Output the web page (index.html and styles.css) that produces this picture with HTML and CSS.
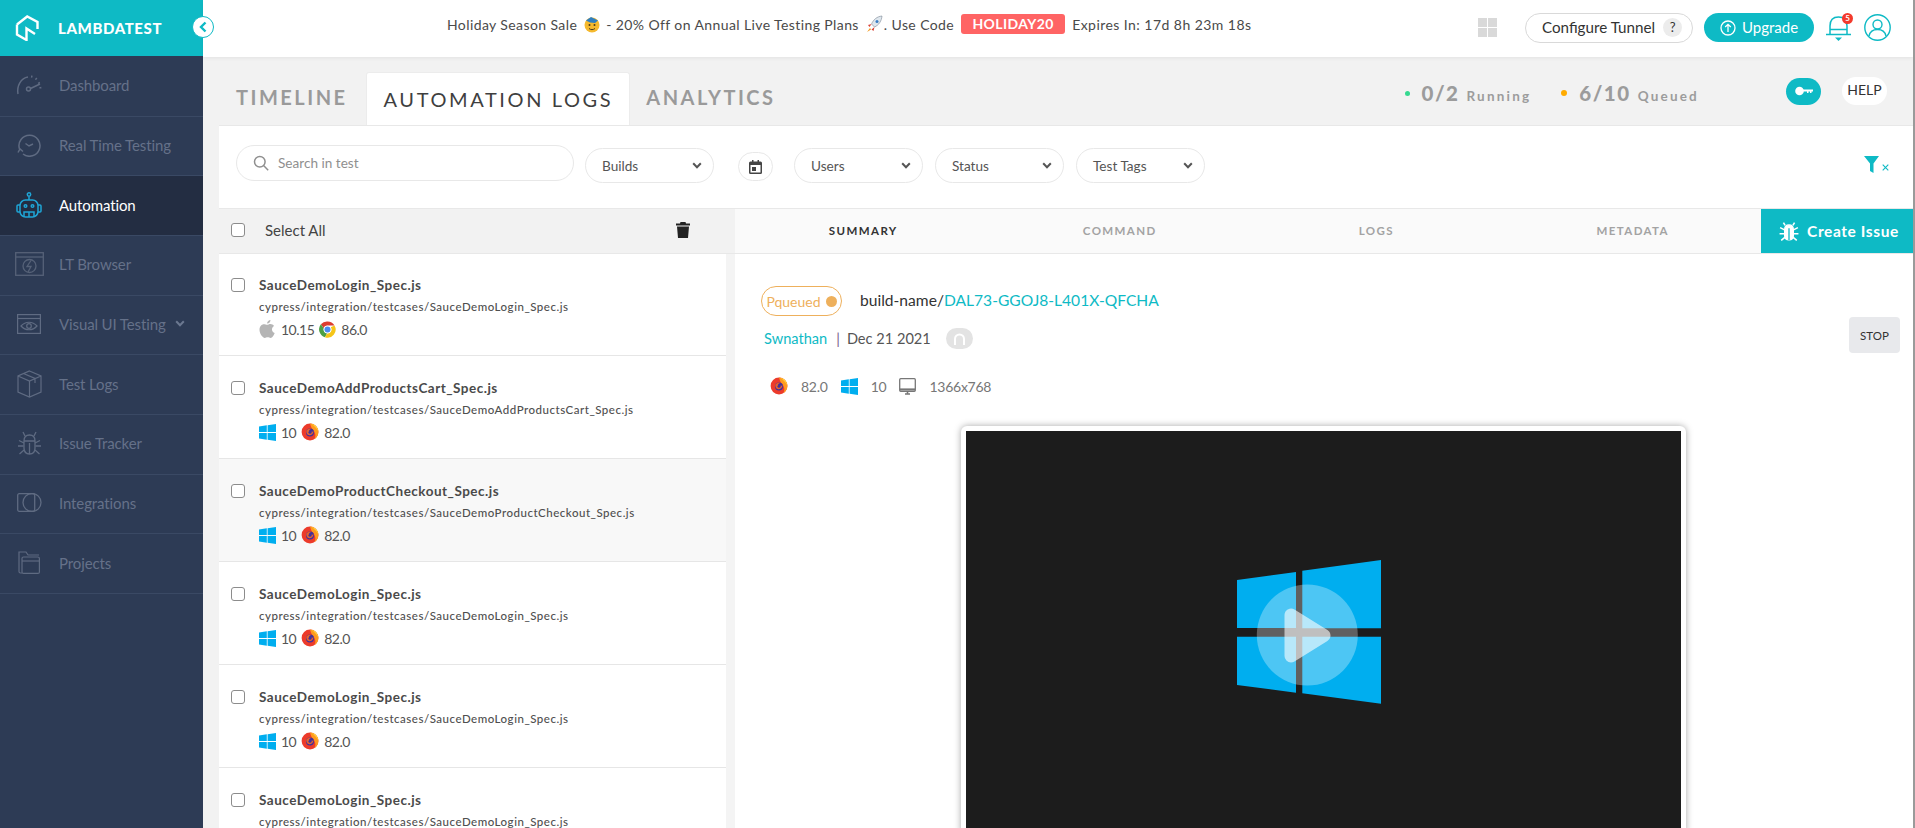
FILE: index.html
```html
<!DOCTYPE html>
<html lang="en">
<head>
<meta charset="utf-8">
<title>LambdaTest Automation Logs</title>
<link rel="stylesheet" href="styles.css">
</head>
<body>
<svg class="defs" aria-hidden="true">
  <symbol id="win" viewBox="0 0 17 17">
    <path fill="#00aeef" d="M0 2.4 7.8 1.3V8H0zM8.6 1.2 17 0V8H8.6zM0 9h7.8v6.7L0 14.6zM8.6 9H17v8l-8.4-1.2z"/>
  </symbol>
  <symbol id="fox" viewBox="0 0 18 18">
    <circle cx="9" cy="9" r="8.4" fill="#ec3b2b"/>
    <path fill="#ff9a1f" d="M9 .6c4.6 0 8.4 3.8 8.4 8.4 0 3-1.5 5.6-3.9 7.1 1.400-2.600 1.300-6.400-1.500-9.100C10.500 5.600 9.800 3.500 9 .6z"/>
    <path fill="#ffd83a" d="M10.500.8c3.700.8 6.500 4 6.900 7.700-1.100-2.800-4-5.400-6.900-7.700z"/>
    <circle cx="9" cy="9.400" r="4" fill="#41309c"/>
    <path fill="#f8681f" d="M5.400 7.600C6.600 5.800 8.600 5.400 10.500 6c-1.600.3-2.300 1-2.400 2 1.400 1.400 3.300.7 4.400.2-.3 2.600-2.200 4.300-4.200 4.100C6 12 4.900 9.700 5.400 7.600z" opacity=".9"/>
    <circle cx="9" cy="9.300" r="1.500" fill="#41309c"/>
  </symbol>
  <symbol id="chrome" viewBox="0 0 18 18">
    <path fill="#dc3d30" d="M9 .5A8.500 8.500 0 0 1 16.400 4.800H9A4.200 4.200 0 0 0 5 7.800L2 3.500A8.500 8.500 0 0 1 9 .5z"/>
    <path fill="#4c9f45" d="M2 3.500 5 7.800A4.200 4.200 0 0 0 8.600 13.200L6.300 17.100A8.500 8.500 0 0 1 2 3.500z"/>
    <path fill="#f5c518" d="M16.400 4.800A8.500 8.500 0 0 1 6.300 17.100L8.600 13.200A4.200 4.200 0 0 0 12.400 6.500z"/>
    <circle cx="9" cy="9" r="4" fill="#fff"/>
    <circle cx="9" cy="9" r="3.200" fill="#4a8bf0"/>
  </symbol>
  <symbol id="apple" viewBox="0 0 16 18">
    <path fill="#b5b5b5" d="M11.500 0c.1 1.800-1.500 3.700-3.400 3.600C7.900 1.900 9.700.1 11.500 0zM8.100 4.800c.9 0 1.900-.8 3.400-.8 1.300 0 2.700.7 3.500 1.900-3 1.800-2.500 5.800.7 7-.8 2-2.400 5-4.100 5-1.100 0-1.500-.7-2.900-.7s-1.900.7-2.900.7C3.500 17.900.5 13.500.5 9.800.5 6.300 2.800 4.200 4.800 4.200c1.300 0 2.400.6 3.300.6z"/>
  </symbol>
  <symbol id="chev" viewBox="0 0 10 7">
    <path d="M1.200 1.200 5 5.200 8.800 1.200" fill="none" stroke="currentColor" stroke-width="2"/>
  </symbol>
</svg>

<aside class="sidebar">
  <div class="brand">
    <svg class="brand-logo" width="24" height="26" viewBox="0 0 24 26" fill="none" stroke="#fff" stroke-width="2.400">
      <path d="M2 9.500 12.200 1.500 22.500 7V14M2 9.500V19.500L11.500 25V13.500L20 19"/>
    </svg>
    <span class="brand-name">LAMBDATEST</span>
    <span class="collapse">
      <svg width="10" height="12" viewBox="0 0 10 12" fill="none" stroke="#0ebac5" stroke-width="2.400"><path d="M7.500 1.500 3 6l4.500 4.500"/></svg>
    </span>
  </div>
  <nav class="nav">
    <a class="nav-row"><span class="nav-ico"><svg width="26" height="22" viewBox="0 0 26 22" fill="none" stroke="#5f6b82" stroke-width="1.500"><path d="M2 20C.5 12 5 4 12 3"/><path d="M15 2.500C20 3 24 8 24.500 15" stroke-width="2" stroke-dasharray="1.500 3.500"/><circle cx="12.500" cy="15" r="2"/><path d="M14.500 14.500 24 10"/></svg></span>Dashboard</a>
    <a class="nav-row"><span class="nav-ico"><svg width="24" height="24" viewBox="0 0 24 24" fill="none" stroke="#5f6b82" stroke-width="1.500"><path d="M2.500 16A10.500 10.500 0 1 1 6 21"/><path d="M1 19.500 3 16l3 2.500"/><path d="M8.500 10.500 12 13l4-2"/></svg></span>Real Time Testing</a>
    <a class="nav-row active"><span class="nav-ico"><svg width="26" height="26" viewBox="0 0 26 26" fill="none" stroke="#1fa5d6" stroke-width="1.500"><circle cx="13" cy="2.500" r="1.700"/><path d="M13 4.500V8"/><rect x="4" y="8" width="18" height="17" rx="5.500"/><path d="M4 13H2a1 1 0 0 0-1 1v5a1 1 0 0 0 1 1h2M22 13h2a1 1 0 0 1 1 1v5a1 1 0 0 1-1 1h-2"/><circle cx="9.500" cy="14" r="1.300"/><circle cx="16.500" cy="14" r="1.300"/><path d="M8 25v-5h10v5M13 20v5"/></svg></span>Automation</a>
    <a class="nav-row"><span class="nav-ico"><svg width="29" height="24" viewBox="0 0 29 24" fill="none" stroke="#566278" stroke-width="1.300"><rect x=".7" y=".7" width="27.600" height="22.600"/><path d="M1 5h27"/><circle cx="14.500" cy="14" r="6.500"/><path d="M16 8.500 12 14.500h4L13 20"/></svg></span>LT Browser</a>
    <a class="nav-row"><span class="nav-ico"><svg width="24" height="20" viewBox="0 0 24 20" fill="none" stroke="#5f6b82" stroke-width="1.200"><rect x=".6" y=".6" width="22.800" height="18.800"/><path d="M1 4.500h22"/><path d="M4 12c4.500-5 11.500-5 16 0-4.500 5-11.500 5-16 0z"/><circle cx="12" cy="12" r="2.300"/></svg></span>Visual UI Testing<svg class="nav-chev" width="10" height="7"><use href="#chev"/></svg></a>
    <a class="nav-row"><span class="nav-ico"><svg width="25" height="28" viewBox="0 0 25 28" fill="none" stroke="#5f6b82" stroke-width="1.200"><path d="M12.500 1 24 6v16l-11.500 5L1 22V6zM1 6l11.500 5L24 6M12.500 11v16M6.500 3.500 18 8.500V13"/></svg></span>Test Logs</a>
    <a class="nav-row"><span class="nav-ico"><svg width="25" height="26" viewBox="0 0 25 26" fill="none" stroke="#5f6b82" stroke-width="1.300"><path d="M7 11c0-4 2.500-6 5.500-6s5.500 2 5.500 6v7c0 4-2.500 6-5.500 6S7 22 7 18z"/><path d="M7 11h11M12.500 13v11M8 6 6 2M17 6l2-4M7 13 2 10.500M18 13l5-2.500M6.500 16H1M18.500 16H24M7 20l-4.500 4M18 20l4.500 4"/></svg></span>Issue Tracker</a>
    <a class="nav-row"><span class="nav-ico"><svg width="25" height="19" viewBox="0 0 25 19" fill="none" stroke="#5f6b82" stroke-width="1.300"><rect x=".7" y=".7" width="17" height="17.600" rx="1.500"/><circle cx="15" cy="9.500" r="9"/></svg></span>Integrations</a>
    <a class="nav-row"><span class="nav-ico"><svg width="22" height="23" viewBox="0 0 22 23" fill="none" stroke="#5f6b82" stroke-width="1.200"><path d="M4 22H2.500A1.500 1.500 0 0 1 1 20.500V1h7l2 3h11"/><rect x="4" y="6" width="17.400" height="16.400" rx="1.500"/><path d="M4 10h17"/></svg></span>Projects</a>
  </nav>
</aside>

<div class="main">
  <header class="topbar">
    <div class="promo">
      <span>Holiday Season Sale</span>
      <svg class="emoji" width="16" height="17" viewBox="0 0 16 17"><circle cx="8" cy="9" r="7.500" fill="#f5b92e"/><path d="M2 4.500 7 1l7 3.500-3 2.500-5-.5z" fill="#2f7fc0"/><circle cx="5.500" cy="9" r="1" fill="#4a3a1a"/><circle cx="10.500" cy="9" r="1" fill="#4a3a1a"/><path d="M5 12.500c2 1.500 4 1.500 6 0" stroke="#4a3a1a" fill="none"/></svg>
      <span>- 20% Off on Annual Live Testing Plans</span>
      <svg class="emoji" width="17" height="18" viewBox="0 0 17 18"><path d="M16 1c-5 .5-8.500 3.500-10.500 8l3 3c4.500-2 7-6 7.500-11z" fill="#dfe7ee" stroke="#7b8794" stroke-width=".6"/><path d="M5.500 9 2 10l1.500 2zM8.500 12 7.500 16l-2-1.500z" fill="#d9443a"/><path d="M4 13 1 17l4-2.500z" fill="#f39a1e"/><circle cx="11" cy="6.500" r="1.500" fill="#3b7dc4"/></svg>
      <span class="promo-tight">. Use Code</span>
      <span class="code">HOLIDAY20</span>
      <span>Expires In: 17d 8h 23m 18s</span>
    </div>
    <div class="top-actions">
      <span class="apps"><i></i><i></i><i></i><i></i></span>
      <button class="tunnel">Configure Tunnel<span class="q">?</span></button>
      <button class="upgrade"><svg width="16" height="16" viewBox="0 0 16 16" fill="none" stroke="#fff" stroke-width="1.300"><circle cx="8" cy="8" r="7"/><path d="M8 12V4.500M5.200 7 8 4.300 10.800 7"/></svg>Upgrade</button>
      <span class="bell">
        <svg width="27" height="28" viewBox="0 0 27 28" fill="none" stroke="#0ebac5" stroke-width="1.500"><path d="M5 20V12C5 6 8.500 3 13.500 3S22 6 22 12v8M1 20.500h25"/><path d="M5 15.500h17"/><path d="M10 23.500h7l-3.500 3.500z" fill="#0ebac5" stroke="none"/></svg>
        <b class="badge">5</b>
      </span>
      <svg class="user" width="27" height="27" viewBox="0 0 27 27" fill="none" stroke="#0ebac5" stroke-width="1.400"><circle cx="13.500" cy="13.500" r="12.700"/><circle cx="13.500" cy="10.500" r="4.500"/><path d="M5 22c1-4.500 4.500-6.500 8.500-6.500S21 17.500 22 22"/></svg>
    </div>
  </header>

  <div class="tabbar">
    <span class="tab first">TIMELINE</span>
    <span class="tab active">AUTOMATION LOGS</span>
    <span class="tab">ANALYTICS</span>
    <div class="stats">
      <span class="stat"><i class="dot green"></i><b>0/2</b><small>Running</small></span>
      <span class="stat"><i class="dot amber"></i><b>6/10</b><small>Queued</small></span>
      <span class="key"><svg width="18" height="10" viewBox="0 0 18 10" fill="#fff"><circle cx="4.500" cy="5" r="4.300"/><path d="M8 3.500h10v2H16.500v1.500h-1.500V5.500h-1.500v1.500H12V5.500H8z"/></svg></span>
      <span class="help">HELP</span>
    </div>
  </div>

  <div class="content">
    <div class="filters">
      <label class="search">
        <svg width="16" height="16" viewBox="0 0 16 16" fill="none" stroke="#8f8f8f" stroke-width="1.500"><circle cx="6.800" cy="6.800" r="5.300"/><path d="m10.800 10.800 4.400 4.400"/></svg>
        <span>Search in test</span>
      </label>
      <span class="select">Builds<svg width="10" height="7"><use href="#chev"/></svg></span>
      <span class="cal"><svg width="13" height="14" viewBox="0 0 13 14" fill="#444"><path d="M1.500 1.500H3V0h1.500v1.500h4V0H10v1.500h1.500A1.500 1.500 0 0 1 13 3v9.500a1.500 1.500 0 0 1-1.500 1.500h-10A1.500 1.500 0 0 1 0 12.500V3a1.500 1.500 0 0 1 1.500-1.500zM1.500 5v7.500h10V5z"/><rect x="3" y="7" width="4" height="4"/></svg></span>
      <span class="select">Users<svg width="10" height="7"><use href="#chev"/></svg></span>
      <span class="select">Status<svg width="10" height="7"><use href="#chev"/></svg></span>
      <span class="select">Test Tags<svg width="10" height="7"><use href="#chev"/></svg></span>
      <span class="clear-filter"><svg width="15" height="17" viewBox="0 0 15 17" fill="#0ebac5"><path d="M0 0h15L9.500 7.500V17L6 15V7.500z"/></svg><svg class="clear-x" width="7" height="7" viewBox="0 0 7 7" stroke="#0ebac5" stroke-width="1.100"><path d="m.7.7 5.600 5.600M6.300.7.700 6.300"/></svg></span>
    </div>

    <div class="split">
      <section class="list">
        <div class="list-head">
          <input class="check" type="checkbox" aria-label="Select all">
          <span class="select-all">Select All</span>
          <svg class="trash" width="14" height="16" viewBox="0 0 14 16" fill="#222"><path d="M4.500 0h5l.5 1.500h4v2H0v-2h4zM1 4.500h12L12 16H2z"/></svg>
        </div>
        <article class="row">
          <input class="check" type="checkbox" aria-label="Select test">
          <div>
            <h3>SauceDemoLogin_Spec.js</h3>
            <p class="path">cypress/integration/testcases/SauceDemoLogin_Spec.js</p>
            <div class="meta"><svg class="apple-ico" width="16" height="18"><use href="#apple"/></svg>10.15<svg width="17" height="17"><use href="#chrome"/></svg>86.0</div>
          </div>
        </article>
        <article class="row">
          <input class="check" type="checkbox" aria-label="Select test">
          <div>
            <h3>SauceDemoAddProductsCart_Spec.js</h3>
            <p class="path">cypress/integration/testcases/SauceDemoAddProductsCart_Spec.js</p>
            <div class="meta"><svg width="17" height="17"><use href="#win"/></svg>10<svg width="18" height="18"><use href="#fox"/></svg>82.0</div>
          </div>
        </article>
        <article class="row hover">
          <input class="check" type="checkbox" aria-label="Select test">
          <div>
            <h3>SauceDemoProductCheckout_Spec.js</h3>
            <p class="path">cypress/integration/testcases/SauceDemoProductCheckout_Spec.js</p>
            <div class="meta"><svg width="17" height="17"><use href="#win"/></svg>10<svg width="18" height="18"><use href="#fox"/></svg>82.0</div>
          </div>
        </article>
        <article class="row">
          <input class="check" type="checkbox" aria-label="Select test">
          <div>
            <h3>SauceDemoLogin_Spec.js</h3>
            <p class="path">cypress/integration/testcases/SauceDemoLogin_Spec.js</p>
            <div class="meta"><svg width="17" height="17"><use href="#win"/></svg>10<svg width="18" height="18"><use href="#fox"/></svg>82.0</div>
          </div>
        </article>
        <article class="row">
          <input class="check" type="checkbox" aria-label="Select test">
          <div>
            <h3>SauceDemoLogin_Spec.js</h3>
            <p class="path">cypress/integration/testcases/SauceDemoLogin_Spec.js</p>
            <div class="meta"><svg width="17" height="17"><use href="#win"/></svg>10<svg width="18" height="18"><use href="#fox"/></svg>82.0</div>
          </div>
        </article>
        <article class="row">
          <input class="check" type="checkbox" aria-label="Select test">
          <div>
            <h3>SauceDemoLogin_Spec.js</h3>
            <p class="path">cypress/integration/testcases/SauceDemoLogin_Spec.js</p>
          </div>
        </article>
      </section>

      <section class="detail">
        <div class="detail-tabs">
          <span class="dtab current">SUMMARY</span>
          <span class="dtab">COMMAND</span>
          <span class="dtab">LOGS</span>
          <span class="dtab">METADATA</span>
          <button class="issue"><svg width="20" height="20" viewBox="0 0 18 18" fill="#fff" stroke="#fff"><path d="M5 8c0-3 1.500-4.500 4-4.500S13 5 13 8v5c0 2.500-1.500 4-4 4s-4-1.500-4-4z"/><path d="M5.500 4 4 1.500M12.500 4 14 1.500M5 8 1 6M13 8l4-2M5 11.500H.5M13 11.500h4.500M5.500 14.500 2 17.500M12.500 14.500l3.500 3" fill="none" stroke-width="1.400"/><path d="M9 6.500v10.500" stroke="#0ebac5" stroke-width="1.200"/></svg>Create Issue</button>
        </div>
        <div class="summary">
          <div class="summary-head">
            <div class="info">
              <div class="info-top">
                <span class="status">Pqueued<i></i></span>
                <span class="build">build-name/<a>DAL73-GGOJ8-L401X-QFCHA</a></span>
              </div>
              <div class="info-by">
                <a>Swnathan</a><span class="pipe">|</span><span>Dec 21 2021</span>
                <span class="tag"><svg width="13" height="13" viewBox="0 0 13 13" fill="none" stroke="#fff" stroke-width="2"><path d="M2 13V7a4.500 4.500 0 0 1 9 0v6"/></svg></span>
              </div>
            </div>
            <button class="stop">STOP</button>
          </div>
          <div class="env">
            <svg width="18" height="18"><use href="#fox"/></svg><span>82.0</span>
            <svg width="17" height="17"><use href="#win"/></svg><span>10</span>
            <svg width="17" height="17" viewBox="0 0 17 17" fill="none" stroke="#777" stroke-width="1.300"><rect x=".7" y=".7" width="15.600" height="12.600" rx="1"/><path d="M1 11.500h15" stroke-width="2.200"/><path d="M6 16h5M8.500 13.500V16" stroke-width="1.600"/></svg><span>1366x768</span>
          </div>
          <div class="video-card">
            <svg class="video" width="715" height="402" viewBox="0 0 715 402">
              <rect width="715" height="402" fill="#1c1c1c"/>
              <path fill="#00aeef" d="M271 149 330 141V197H271zM336.300 139.700 415 129V197.300H336.300zM271 205.700H330V261.700L271 254zM336.300 205.700H415V272.700L336.300 262.300z"/>
              <circle cx="341.300" cy="204" r="50.500" fill="#fff" opacity=".3"/>
              <path d="M325 184V225L358 204.500z" fill="#fff" stroke="#fff" stroke-width="13" stroke-linejoin="round" opacity=".6"/>
            </svg>
          </div>
        </div>
      </section>
    </div>
  </div>
</div>
</body>
</html>
```

FILE: styles.css
```css
* { box-sizing: border-box; }
html, body { height: 100%; }
body {
  margin: 0;
  display: flex;
  height: 828px;
  overflow: hidden;
  background: #fff;
  color: #333;
  font-family: Lato, "Open Sans", sans-serif;
  border-right: 2px solid #9a9a9a;
}
a { color: inherit; text-decoration: none; }
h3, p { margin: 0; }
button { font-family: inherit; border: 0; padding: 0; }
.defs { position: absolute; width: 0; height: 0; }

/* Sidebar */
.sidebar { width: 203px; flex: none; background: #2d3b55; }
.brand {
  position: relative;
  height: 56px;
  display: flex;
  align-items: center;
  padding-left: 15px;
  background: #0ebac5;
}
.brand-name {
  margin-left: 19px;
  color: #fff;
  font-size: 15px;
  font-weight: 900;
  letter-spacing: .6px;
}
.collapse {
  position: absolute;
  z-index: 3;
  right: -11px;
  top: 16px;
  width: 22px;
  height: 22px;
  display: flex;
  align-items: center;
  justify-content: center;
  background: #fff;
  border: 1px solid #0ebac5;
  border-radius: 50%;
}
.nav { padding-top: 1px; }
.nav-row {
  height: 59.67px;
  display: flex;
  align-items: center;
  padding-bottom: 2px;
  border-bottom: 1px solid #3a4964;
  color: #657189;
  font-size: 15px;
  letter-spacing: -.12px;
}
.nav-row.active { background: #232d42; color: #fff; }
.nav-ico { width: 59px; flex: none; display: flex; justify-content: center; padding-right: 1px; }
.nav-chev { margin-left: 9px; color: #6b7890; }

/* Main column */
.main { flex: 1; min-width: 0; display: flex; flex-direction: column; background: #f2f2f2; }
.topbar {
  position: relative;
  z-index: 2;
  height: 57px;
  flex: none;
  display: flex;
  align-items: flex-start;
  background: #fff;
  box-shadow: 0 1px 4px rgba(0, 0, 0, .07);
}
.promo {
  margin-left: 244px;
  height: 48px;
  display: flex;
  align-items: center;
  color: #4a4a4a;
  font-size: 14px;
  letter-spacing: .4px;
  white-space: nowrap;
}
.emoji { margin: 0 6px 0 7px; }
.promo-tight { margin-left: -5px; }
.code {
  margin: 0 7px;
  width: 104px;
  height: 20px;
  line-height: 20px;
  text-align: center;
  color: #fff;
  background: #ff6464;
  border-radius: 3px;
  font-weight: 700;
  font-size: 14px;
}
.code + span { letter-spacing: .45px; }
.top-actions { margin-left: auto; margin-right: 22px; height: 55px; display: flex; align-items: center; }
.apps { width: 19px; display: grid; grid-template-columns: 9px 9px; gap: 1px; margin-right: 28px; }
.apps i { height: 9px; background: #d9d9d9; }
.tunnel {
  width: 168px;
  height: 30px;
  display: flex;
  align-items: center;
  justify-content: center;
  padding: 0 0 2px 6px;
  background: #fff;
  border: 1px solid #d9d9d9;
  border-radius: 15px;
  color: #333;
  font-size: 15.200px;
}
.q {
  width: 19px;
  height: 19px;
  margin: 2px 0 0 8px;
  border-radius: 50%;
  background: #ececec;
  font-size: 13px;
  line-height: 19px;
}
.upgrade {
  width: 110px;
  height: 29px;
  margin-left: 11px;
  display: flex;
  align-items: center;
  justify-content: center;
  gap: 6px;
  padding-bottom: 2px;
  background: #0ebac5;
  color: #fff;
  border-radius: 15px;
  font-size: 15px;
}
.upgrade svg { margin-top: 2px; }
.bell { position: relative; width: 27px; height: 28px; margin-left: 11px; }
.badge {
  position: absolute;
  right: -1px;
  top: -1px;
  width: 11px;
  height: 11px;
  border-radius: 50%;
  background: #f33a2c;
  color: #fff;
  font-size: 8px;
  line-height: 11px;
  text-align: center;
}
.user { margin-left: 12px; }

/* Tab bar */
.tabbar { height: 68px; flex: none; display: flex; align-items: flex-end; padding-left: 33px; background: #f2f2f2; }
.tab {
  height: 53px;
  line-height: 50px;
  color: #9a9a9a;
  font-size: 20px;
  font-weight: 700;
  letter-spacing: 2.500px;
}
.tab.first { margin-right: 18px; }
.tab.active {
  padding: 1px 16px 0 17px;
  margin-right: 16px;
  background: #fff;
  color: #3f3f3f;
  font-weight: 400;
  letter-spacing: 2.600px;
  border-radius: 3px 3px 0 0;
  border: 1px solid #ececec;
  border-bottom: 0;
}
.stats { margin-left: auto; margin-right: 26px; height: 68px; display: flex; align-items: center; padding-top: 4px; }
.stat { display: flex; align-items: baseline; color: #9c9c9c; margin-right: 30px; font-weight: 700; }
.stat:nth-child(2) { margin-right: 87px; }
.stat b { font-size: 20.500px; letter-spacing: 1.500px; }
.stat small { margin-left: 7px; font-size: 13.500px; letter-spacing: 2.200px; }
.dot { width: 5px; height: 5px; border-radius: 50%; margin-right: 12px; align-self: center; }
.dot.green { background: #35d990; }
.dot.amber { background: #ffab00; width: 6px; height: 6px; }
.key {
  width: 35px;
  height: 27px;
  display: flex;
  align-items: center;
  justify-content: center;
  margin: -4px 21px 0 0;
  background: #0ebac5;
  border-radius: 14px;
}
.help {
  width: 45px;
  height: 28px;
  line-height: 26px;
  margin-top: -4px;
  text-align: center;
  background: #fff;
  border-radius: 14px;
  color: #333;
  font-size: 14px;
}

/* Content */
.content { flex: 1; min-height: 0; margin-left: 16px; background: #fff; border-top: 1px solid #e8e8e8; display: flex; flex-direction: column; }
.filters {
  height: 82px;
  flex: none;
  display: flex;
  align-items: flex-start;
  padding: 20px 24px 0 17px;
  font-size: 13.600px;
  color: #555;
}
.search {
  width: 338px;
  height: 36px;
  display: flex;
  align-items: center;
  gap: 9px;
  padding: 0 0 1px 16px;
  border: 1px solid #e8e8e8;
  border-radius: 18px;
  color: #8f8f8f;
  margin-top: -1px;
}
.select {
  width: 129px;
  height: 35px;
  margin-left: 12px;
  display: flex;
  align-items: center;
  justify-content: space-between;
  padding: 0 11px 0 16px;
  border: 1px solid #e8e8e8;
  border-radius: 18px;
  color: #555;
  margin-top: 2px;
}
.search + .select { margin-left: 11px; }
.cal {
  width: 35px;
  height: 29px;
  margin: 6px 21px 0 24px;
  display: flex;
  align-items: center;
  justify-content: center;
  border: 1px solid #e8e8e8;
  border-radius: 15px;
}
.cal + .select { margin-left: 0; }
.clear-filter { margin-left: auto; margin-top: 10px; display: flex; align-items: flex-end; gap: 3px; }
.clear-x { margin-bottom: 2px; }
.split { flex: 1; min-height: 0; display: flex; }

/* Test list */
.list { width: 516px; flex: none; overflow: hidden; background: #f4f4f4; }
.check {
  appearance: none;
  width: 14px;
  height: 14px;
  margin: 0;
  flex: none;
  background: #fff;
  border: 1.5px solid #8c8c8c;
  border-radius: 3px;
}
.list-head {
  height: 46px;
  display: flex;
  align-items: center;
  padding: 0 45px 2px 12px;
  background: #f2f2f2;
  border-top: 1px solid #e8e8e8;
  border-bottom: 1px solid #e8e8e8;
}
.select-all { margin-left: 20px; font-size: 15px; color: #444; }
.trash { margin-left: auto; }
.row {
  width: 507px;
  height: 103px;
  display: flex;
  align-items: flex-start;
  gap: 14px;
  padding: 25px 0 0 12px;
  background: #fff;
  border-bottom: 1px solid #e6e6e6;
}
.list-head + .row { height: 102px; padding-top: 24px; }
.row.hover { background: #f8f8f8; }
.row h3 { font-size: 13.500px; line-height: 14px; font-weight: 700; color: #4a4a4a; letter-spacing: .5px; }
.row .path { margin-top: 8px; font-size: 11.500px; line-height: 14px; font-weight: 500; color: #4f4f4f; letter-spacing: .51px; white-space: nowrap; }
.meta {
  height: 18px;
  margin-top: 6px;
  display: flex;
  align-items: center;
  gap: 5px;
  font-size: 14px;
  letter-spacing: -.5px;
  color: #555;
}
.apple-ico { margin-right: 1px; }

/* Detail */
.detail { flex: 1; min-width: 0; display: flex; flex-direction: column; }
.detail-tabs {
  height: 46px;
  flex: none;
  display: flex;
  align-items: stretch;
  background: #fafafa;
  border-top: 1px solid #e8e8e8;
  border-bottom: 1px solid #e8e8e8;
}
.dtab {
  flex: 1;
  display: flex;
  align-items: center;
  justify-content: center;
  padding-bottom: 2px;
  font-size: 11.500px;
  font-weight: 700;
  letter-spacing: 1.400px;
  color: #a3a3a3;
}
.dtab.current { color: #333; }
.issue {
  width: 152px;
  flex: none;
  display: flex;
  align-items: center;
  justify-content: center;
  gap: 8px;
  padding-left: 4px;
  background: #0ebac5;
  color: #fff;
  font-size: 15.500px;
  font-weight: 700;
  letter-spacing: .6px;
}
.summary { flex: 1; min-height: 0; overflow: hidden; padding: 32px 13px 0 26px; }
.summary-head { display: flex; justify-content: space-between; align-items: flex-start; }
.info-top { display: flex; align-items: center; }
.status {
  width: 81px;
  height: 30px;
  display: flex;
  align-items: center;
  justify-content: center;
  gap: 5px;
  border: 1px solid #eeb05c;
  border-radius: 15px;
  color: #eeb05c;
  font-size: 14px;
}
.status i { width: 11px; height: 11px; border-radius: 50%; background: #eeb05c; }
.build { margin: 0 0 2px 18px; font-size: 15.600px; color: #333; }
.build a { color: #0ebac5; }
.info-by { margin: 11px 0 0 3px; height: 22px; display: flex; align-items: center; font-size: 14.600px; color: #555; }
.info-by a { color: #0ebac5; }
.pipe { margin: 0 7px 0 9px; color: #7a5a8a; }
.tag {
  width: 27px;
  height: 21px;
  margin-left: 15px;
  display: flex;
  align-items: flex-end;
  justify-content: center;
  padding-bottom: 4px;
  background: #e3e3e3;
  border-radius: 11px;
}
.stop {
  width: 51px;
  height: 36px;
  margin-top: 31px;
  background: #e8e9ec;
  border-radius: 4px;
  color: #333;
  font-size: 11.500px;
}
.env {
  height: 18px;
  margin: 24px 0 0 9px;
  display: flex;
  align-items: center;
  color: #777;
  font-size: 14px;
  letter-spacing: -.25px;
}
.env span { margin: 0 13px; }
.video-card {
  width: 725px;
  margin: 31px 0 0 200px;
  padding: 5px 5px 0;
  background: #fff;
  border-radius: 6px 6px 0 0;
  box-shadow: 0 0 7px rgba(0, 0, 0, .35);
}
.video { display: block; }
```
